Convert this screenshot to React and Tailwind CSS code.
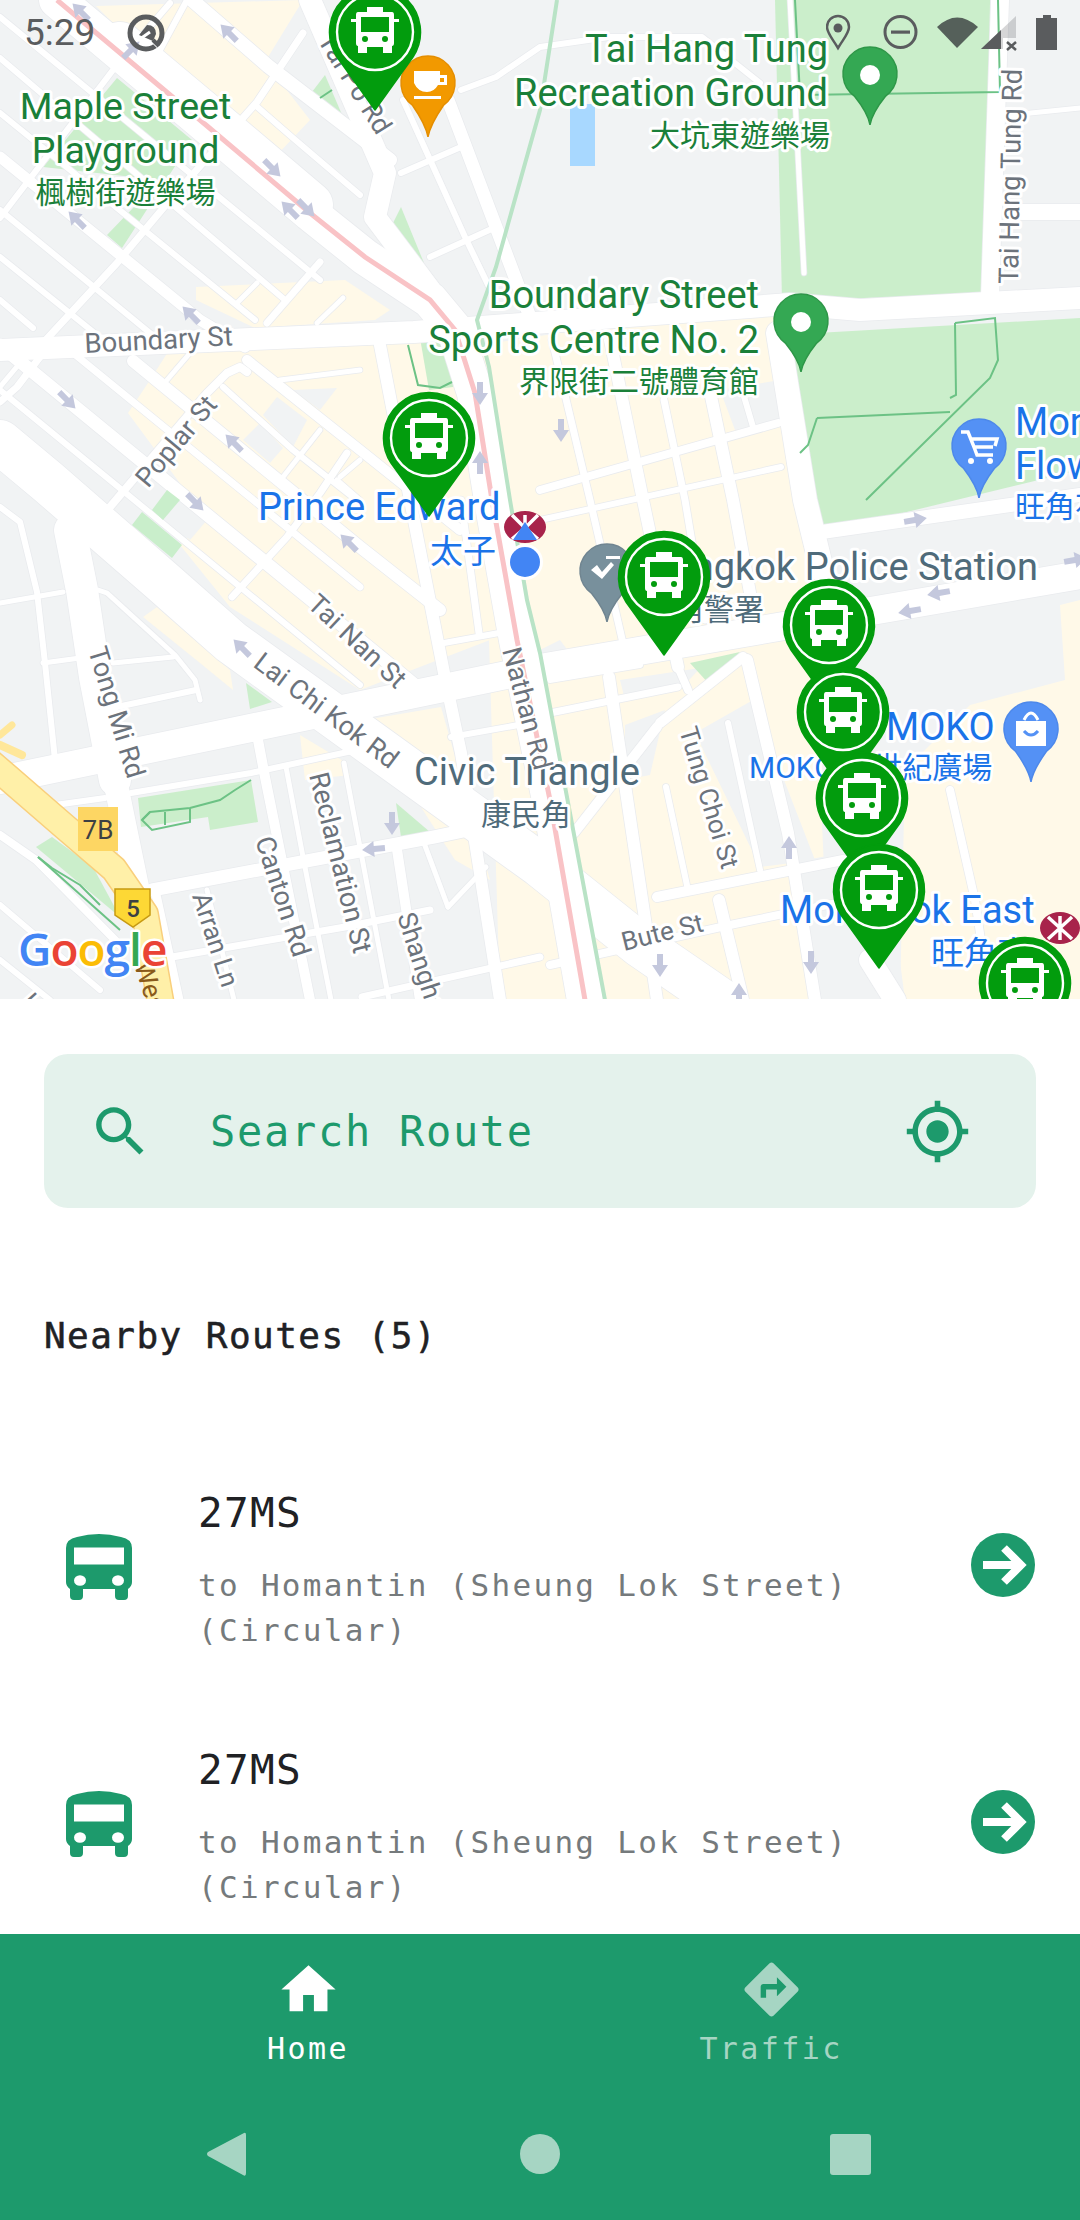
import React from "react";

const roads = [
  ["57,0 200,120 310,213 365,257 430,300 455,330 475,393 492,500 517,640 550,800 585,1000", 36],
  ["120,45 200,112 310,205", 46],
  ["0,350 414,332 790,304 860,310 1080,298", 22],
  ["0,780 241,730 540,668 1080,575", 28],
  ["0,442 48,482 163,582 231,642 400,764 540,865 640,945 720,1000", 44],
  ["70,530 82,590 95,677 115,780", 32],
  ["115,780 150,950 165,1000", 24],
  ["1000,0 990,296", 18],
  ["310,0 385,173 375,217 430,290", 22],
  ["778,333 805,500 822,570", 24],
  ["815,533 1080,495", 14],
  ["1022,212 1080,212", 16],
  ["1010,115 1080,108", 5],
  ["790,0 804,273", 5],
  ["448,100 496,227 530,317", 13],
  ["403,100 427,153 465,237 492,293", 6],
  ["401,173 461,147", 6],
  ["430,257 496,227", 6],
  ["461,90 496,77 540,47 609,37 702,37 760,83", 6],
  ["192,0 268,66 390,160", 14],
  ["255,105 293,138 360,195", 6],
  ["160,50 187,0", 6],
  ["0,17 320,280", 6],
  ["0,58 285,300", 6],
  ["0,113 255,320", 6],
  ["0,157 200,320 245,347", 11],
  ["0,210 167,347", 6],
  ["0,257 97,335", 6],
  ["0,300 33,328", 6],
  ["43,343 117,263 170,200 257,102 303,33", 7],
  ["0,218 113,70 170,3", 6],
  ["238,302 257,283", 5],
  ["267,323 320,262", 7],
  ["317,323 343,298", 5],
  ["0,345 200,509 360,640 427,695", 13],
  ["72,352 360,587", 7],
  ["133,361 360,547 440,610", 12],
  ["0,390 360,685", 6],
  ["223,387 293,450 360,503", 6],
  ["247,360 360,450 460,530", 10],
  ["337,480 360,500", 5],
  ["110,507 207,393 227,373 240,367 247,372", 8],
  ["0,402 17,387 43,353", 7],
  ["0,387 20,363", 5],
  ["167,380 190,353", 5],
  ["232,597 287,537 320,493 347,453", 7],
  ["283,477 320,430", 5],
  ["340,477 360,460", 5],
  ["280,380 360,370", 5],
  ["0,507 20,522 37,592 45,663 55,760", 6],
  ["0,603 63,592", 5],
  ["43,663 80,658", 5],
  ["113,663 173,657", 5],
  ["98,590 107,593 175,655 195,680 200,700", 5],
  ["379,340 410,500 444,673 461,753 500,1000", 12],
  ["461,500 479,633", 7],
  ["444,643 499,633", 6],
  ["451,737 530,723", 6],
  ["552,340 590,500 628,665", 7],
  ["610,340 643,500 678,667", 12],
  ["664,400 685,500 705,620", 7],
  ["709,387 733,500 755,620", 12],
  ["743,393 753,427", 6],
  ["540,490 778,423", 8],
  ["540,520 781,467", 6],
  ["609,677 657,1000", 12],
  ["678,667 688,690", 8],
  ["660,723 743,657", 10],
  ["574,833 657,727", 10],
  ["666,787 688,890", 6],
  ["719,900 743,1000", 12],
  ["747,660 788,833 815,1000", 12],
  ["728,723 760,870", 6],
  ["870,960 895,1000", 22],
  ["657,897 843,860", 10],
  ["550,965 730,925 900,890", 8],
  ["550,713 678,687", 7],
  ["550,680 640,665", 6],
  ["117,707 196,690", 6],
  ["131,793 251,773 380,745", 6],
  ["55,805 105,798", 6],
  ["152,890 434,837 540,815", 13],
  ["172,957 345,927 430,910", 7],
  ["362,997 540,957", 7],
  ["258,740 265,777 310,1000", 10],
  ["286,767 303,857 331,1000", 5],
  ["344,763 389,1000", 5],
  ["396,843 420,1000", 10],
  ["424,843 448,907", 5],
  ["448,907 486,867", 5],
  ["155,890 179,1000", 9],
  ["207,890 234,1000", 5],
  ["0,835 36,860 120,945", 8],
  ["0,905 100,990", 6],
  ["0,960 50,1000", 6],
  ["950,790 975,900 990,1000", 8],
];

const arrows = [
  [81,12,-45],[229,33,-45],[131,50,45],[272,168,135],[290,210,-45],[306,208,135],[77,220,-45],[191,315,-45],
  [67,400,135],[234,443,-45],[480,393,180],[480,463,0],[195,502,135],[349,543,-45],[242,648,-45],[392,823,180],
  [374,849,-95],[561,430,180],[915,520,80],[1075,560,80],[939,593,-100],[910,611,-100],
  [789,848,0],[660,965,180],[811,962,180],[739,995,0],
];

const parkLines = [
  "795,0 800,95 1000,92 998,0",
  "955,323 995,318 998,360 990,378 866,500",
  "955,323 956,395 950,398",
  "817,418 950,412",
  "817,418 808,445 800,453",
  "408,345 418,385 440,388 452,382",
  "142,820 150,812 190,808 220,800 235,790 251,780",
  "150,812 142,820 152,830 190,822 190,808",
  "165,812 165,825",
  "38,857 52,868 80,885 100,905",
  "38,857 120,930",
  "320,98 332,90",
];

function Road({ pts, w, color }) {
  return <polyline points={pts} fill="none" stroke={color} strokeWidth={w} strokeLinejoin="round" strokeLinecap="round" />;
}

function BusMarker({ x, y }) {
  return (
    <g transform={`translate(${x} ${y})`}>
      <path d="M0 78 L-38 25 A45.5 45.5 0 1 1 38 25 Z" fill="#029c0d" stroke="#029c0d" strokeWidth="1.5" strokeLinejoin="round" />
      <circle r="38" fill="none" stroke="#fff" strokeWidth="2.4" />
      <path d="M-8 -25 H8 V-20 H17 Q19 -20 19 -17 V-13 H24 V-10 H19 V11 Q19 14 17 14 V21 H8 V15 H-8 V21 H-17 V14 Q-19 14 -19 11 V-10 H-24 V-13 H-19 V-17 Q-19 -20 -17 -20 H-8 Z" fill="#fff" />
      <rect x="-14" y="-15" width="28" height="15" fill="#029c0d" />
      <circle cx="-10" cy="7" r="3" fill="#029c0d" />
      <circle cx="10" cy="7" r="3" fill="#029c0d" />
    </g>
  );
}

function Pin({ x, y, tip, r = 27, fill, edge, children }) {
  const d = tip - y;
  const a = r * 0.82;
  const b = r * 0.58;
  return (
    <g transform={`translate(${x} ${y})`}>
      <path d={`M0 ${d} Q-2 ${d - 12} -${b} ${a * 0.95} A${r} ${r} 0 1 1 ${b} ${a * 0.95} Q2 ${d - 12} 0 ${d} Z`} fill={fill} stroke={edge} strokeWidth="1.5" />
      {children}
    </g>
  );
}

function Label({ x, y, size = 36, fill, anchor = "start", halo = 6, rot, children }) {
  return (
    <text
      x={x}
      y={y}
      fontSize={size}
      fill={fill}
      textAnchor={anchor}
      stroke="#ffffff"
      strokeWidth={halo}
      strokeLinejoin="round"
      transform={rot !== undefined ? `rotate(${rot} ${x} ${y})` : undefined}
      className="[paint-order:stroke]"
    >
      {children}
    </text>
  );
}

const GREEN = "#1a8039";
const BLUE = "#1a73e8";
const SLATE = "#4f6b7a";
const ST = "#6c737c";

function MapCanvas() {
  return (
    <svg viewBox="0 0 1080 999" width="1080" height="999" className="block font-['Roboto','Noto_Sans_CJK_TC',sans-serif]">
      <rect width="1080" height="999" fill="#f1f3f4" />
      <g fill="#fff9e8">
        <polygon points="96,6 303,0 265,62 310,120 275,157 205,115" />
        <polygon points="196,287 345,280 390,310 375,320 255,328 196,300" />
        <polygon points="128,413 150,380 168,352 480,340 490,640 360,690 230,607 180,545 207,520 165,463" />
        <polygon points="143,617 157,607 230,670 233,690 200,663" />
        <polygon points="365,720 441,707 490,880 455,860" />
        <polygon points="480,345 780,300 810,560 830,1000 500,1000" />
        <polygon points="1080,600 1060,605 1065,680 970,705 905,770 900,1000 1080,1000" />
        <polygon points="300,735 345,762 350,775 305,780" />
      </g>
      <g fill="#f1f3f4">
        <polygon points="695,733 753,700 815,860 760,867" />
        <polygon points="795,862 885,845 905,1000 815,1000" />
        <polygon points="620,680 700,668 680,690 625,700" />
        <polygon points="625,725 665,710 650,775 625,780" />
        <polygon points="720,390 780,380 783,425 735,430" />
        <polygon points="263,415 277,397 307,420 293,447" />
        <polygon points="243,440 260,423 283,448 270,463" />
        <polygon points="293,390 337,388 320,410" />
        <polygon points="165,497 207,520 190,540 165,520" />
        <polygon points="540,650 560,640 575,660 545,670" />
        <polygon points="820,535 1080,500 1080,570 870,620" />
      </g>
      <g fill="#cbeecb">
        <polygon points="775,0 990,0 988,295 782,300" />
        <polygon points="782,335 1080,318 1080,470 812,535" />
        <polygon points="117,78 192,140 122,248 107,235 160,180 43,167" />
        <polygon points="312,92 325,75 343,117" />
        <polygon points="391,227 401,207 424,263 391,240" />
        <polygon points="420,338 451,337 453,387 429,390" />
        <polygon points="138,798 251,780 258,822 210,830 208,817 141,827" />
        <polygon points="36,847 52,837 93,867 120,917" />
        <polygon points="246,683 272,702 250,709" />
        <polygon points="396,803 430,832 401,837" />
        <polygon points="690,663 740,652 710,685" />
      </g>
      <rect x="570" y="104" width="25" height="62" fill="#a8d8ff" />
      {roads.map(([p, w], i) => <Road key={"c" + i} pts={p} w={w + 1.5} color="#e9ebee" />)}
      {roads.map(([p, w], i) => <Road key={"r" + i} pts={p} w={w} color="#ffffff" />)}
      <g fill="#c9eecb">
        <polygon points="152,510 167,490 180,500 163,520" />
        <polygon points="132,525 142,512 182,545 172,558" />
      </g>
      <Road pts="-10,762 65,827 114,869 145,914 162,1010" w={28} color="#f9cf7c" />
      <Road pts="-10,762 65,827 114,869 145,914 162,1010" w={25} color="#fff0a8" />
      <Road pts="0,735 12,725" w={7} color="#ffe79a" />
      <Road pts="0,745 22,755" w={8} color="#ffe79a" />
      <polyline points="557,0 540,110 496,267 477,320 489,367 510,500 527,600 540,653 605,1000" fill="none" stroke="#b9e3c6" strokeWidth="4" />
      <polyline points="57,0 200,120 310,213 365,257 430,300 455,330 475,393 492,500 517,640 550,800 585,1000" fill="none" stroke="#f9c3c6" strokeWidth="5" />
      <g fill="none" stroke="#6cc285" strokeWidth="2">
        {parkLines.map((p, i) => <polyline key={i} points={p} />)}
      </g>
      <g fill="#c4c8dd">
        {arrows.map(([x, y, r], i) => (
          <path key={i} transform={`translate(${x} ${y}) rotate(${r})`} d="M0 -12 L8 0 H3 V11 H-3 V0 H-8 Z" />
        ))}
      </g>
      <g>
        <Label x={85} y={353} size={27.5} fill={ST} rot={-3}>Boundary St</Label>
        <Label x={148} y={489} size={27} fill={ST} rot={-50}>Poplar St</Label>
        <Label x={317} y={40} size={27} fill={ST} rot={58}>Tai Po Rd</Label>
        <Label x={88} y={650} size={27} fill={ST} rot={73}>Tong Mi Rd</Label>
        <Label x={306} y={606} size={27} fill={ST} rot={43}>Tai Nan St</Label>
        <Label x={252} y={666} size={27} fill={ST} rot={37}>Lai Chi Kok Rd</Label>
        <Label x={309} y={775} size={27.5} fill={ST} rot={76}>Reclamation St</Label>
        <Label x={255} y={840} size={27} fill={ST} rot={72}>Canton Rd</Label>
        <Label x={192} y={896} size={26} fill={ST} rot={72}>Arran Ln</Label>
        <Label x={397} y={916} size={26.5} fill={ST} rot={72}>Shanghai St</Label>
        <Label x={679} y={730} size={26} fill={ST} rot={73}>Tung Choi St</Label>
        <Label x={624} y={951} size={26} fill={ST} rot={-14}>Bute St</Label>
        <Label x={1018} y={284} size={27.5} fill={ST} rot={-89}>Tai Hang Tung Rd</Label>
        <Label x={20} y={1003} size={26} fill={ST} rot={48}>Lai</Label>
        <Label x={134} y={965} size={26} fill="#8a5a1a" rot={72} halo={0}>West</Label>
      </g>
      <rect x="78" y="807" width="40" height="44" fill="#fdd663" />
      <text x="98" y="839" fontSize="26" fill="#3c4043" textAnchor="middle">7B</text>
      <path d="M115 889 H150 V915 L133 927 L115 915 Z" fill="#fdd835" stroke="#c79a12" strokeWidth="1.5" />
      <text x="133" y="917" fontSize="24" fill="#3c4043" textAnchor="middle" fontWeight="500">5</text>
      <Label x={125.5} y={119} size={37.5} fill={GREEN} anchor="middle">Maple Street</Label>
      <Label x={125.5} y={163} size={37.5} fill={GREEN} anchor="middle">Playground</Label>
      <Label x={125.5} y={203} size={30} fill={GREEN} anchor="middle">楓樹街遊樂場</Label>
      <Label x={828} y={62} size={38} fill={GREEN} anchor="end">Tai Hang Tung</Label>
      <Label x={828} y={106} size={38} fill={GREEN} anchor="end">Recreation Ground</Label>
      <Label x={830} y={146} size={30} fill={GREEN} anchor="end">大坑東遊樂場</Label>
      <Label x={759} y={308} size={38} fill={GREEN} anchor="end">Boundary Street</Label>
      <Label x={759} y={353} size={38} fill={GREEN} anchor="end">Sports Centre No. 2</Label>
      <Label x={759} y={392} size={30} fill={GREEN} anchor="end">界限街二號體育館</Label>
      <Label x={1015} y={435} size={38} fill={BLUE}>Mong Kok</Label>
      <Label x={1015} y={479} size={38} fill={BLUE}>Flower</Label>
      <Label x={1015} y={517} size={30} fill={BLUE}>旺角花</Label>
      <Label x={258} y={520} size={38} fill={BLUE}>Prince Edward</Label>
      <Label x={430} y={563} size={33} fill={BLUE}>太子</Label>
      <Label x={1038} y={580} size={38} fill={SLATE} anchor="end">Mongkok Police Station</Label>
      <Label x={764} y={620} size={30} fill={SLATE} anchor="end">旺角警署</Label>
      <Label x={414} y={785} size={38} fill={SLATE}>Civic Triangle</Label>
      <Label x={481} y={825} size={30} fill={SLATE}>康民角</Label>
      <Label x={886} y={740} size={38} fill={BLUE}>MOKO</Label>
      <Label x={749} y={778} size={30} fill={BLUE}>MOKO 新世紀廣場</Label>
      <Label x={780} y={923} size={38} fill={BLUE}>Mong Kok East</Label>
      <Label x={931} y={965} size={33} fill={BLUE}>旺角東</Label>
      <Label x={502} y={650} size={27} fill={ST} rot={75} halo={4}>Nathan Rd</Label>
      <text x="18" y="966" fontSize="46" fontWeight="600" stroke="#ffffff" strokeWidth="5" strokeLinejoin="round" className="[paint-order:stroke] font-['Open_Sans',sans-serif] tracking-[-1px]">
        <tspan fill="#4285f4">G</tspan><tspan fill="#ea4335">o</tspan><tspan fill="#fbbc05">o</tspan><tspan fill="#4285f4">g</tspan><tspan fill="#34a853">l</tspan><tspan fill="#ea4335">e</tspan>
      </text>
      <Pin x={870} y={75} tip={125} fill="#34a853" edge="#2e9748"><circle r="10" fill="#fff" /></Pin>
      <Pin x={801} y={322} tip={372} fill="#34a853" edge="#2e9748"><circle r="10" fill="#fff" /></Pin>
      <Pin x={428} y={84} tip={137} fill="#f29900" edge="#e58e00">
        <path d="M-14 -13 H12 V-9 H19 V1 H10 Q6 8 -1 8 Q-10 8 -14 -1 Z M12 -6 V-2 H16 V-6 Z" fill="#fff" fillRule="evenodd" />
        <rect x="-14" y="12" width="27" height="3" fill="#fff" />
      </Pin>
      <Pin x={979} y={447} tip={498} fill="#5491f5" edge="#4d88ea">
        <path d="M-18 -15 H-11 L-5 0 H14 M-5 0 L-2 8 H14 M-9 -8 H18 L16 -1" fill="none" stroke="#fff" strokeWidth="3.5" />
        <circle cx="-8" cy="14" r="3" fill="#fff" /><circle cx="11" cy="14" r="3" fill="#fff" />
      </Pin>
      <Pin x={1031} y={730} tip={782} fill="#5491f5" edge="#4d88ea">
        <path d="M-15 -9 H15 V16 H-15 Z" fill="#fff" />
        <path d="M-7 -10 Q0 -24 7 -10" fill="none" stroke="#fff" strokeWidth="3" />
        <path d="M-7 1 Q0 9 7 1" fill="none" stroke="#5491f5" strokeWidth="3" />
      </Pin>
      <Pin x={607} y={572} tip={622} fill="#78909c" edge="#708591">
        <path d="M-16 -2 L-10 -7 L-5 0 L4 -10 L7 -7 L-5 7 Z" fill="#fff" />
        <rect x="-1" y="-16" width="14" height="3" fill="#fff" />
      </Pin>
      <ellipse cx="525" cy="527" rx="21" ry="16" fill="#a8234b" />
      <path d="M512 515 L525 528 L538 515 M512 539 L525 528 L538 539 M525 515 V539" fill="none" stroke="#fff" strokeWidth="3.5" />
      <path d="M525 522 L537 540 H513 Z" fill="#4285f4" />
      <circle cx="525" cy="562" r="18" fill="#ffffff" />
      <circle cx="525" cy="562" r="15" fill="#4285f4" />
      <ellipse cx="1060" cy="928" rx="20" ry="16" fill="#a8234b" />
      <path d="M1048 917 L1060 928 L1072 917 M1048 939 L1060 928 L1072 939 M1060 916 V940" fill="none" stroke="#fff" strokeWidth="3.5" />
      {[[375, 32], [429, 438], [664, 577], [829, 625], [843, 712], [862, 798], [879, 890], [1025, 983]].map(([x, y]) => (
        <BusMarker key={x} x={x} y={y} />
      ))}
    </svg>
  );
}

function StatusBar() {
  return (
    <div className="absolute left-0 top-0 flex h-[66px] w-[1080px] items-center justify-between pl-[24px] pr-[22px] font-['Roboto',sans-serif] text-[37px] text-[#5a5c5e]">
      <div className="flex items-center gap-[32px]">
        <span>5:29</span>
        <svg width="38" height="38" viewBox="0 0 38 38">
          <circle cx="19" cy="19" r="16" fill="none" stroke="#5a5c5e" strokeWidth="5" />
          <path d="M12 21 L20 11 Q29 11 29 20 L26 27 Z" fill="#5a5c5e" />
          <path d="M13 25 L23 18 M27 29 L34 36" stroke="#fff" strokeWidth="3" />
          <path d="M26 26 L32 32" stroke="#5a5c5e" strokeWidth="4" />
        </svg>
      </div>
      <svg width="232" height="40" viewBox="827 13 232 40">
        <path d="M839 48 C833 38 828 33 828 27 A11 11 0 0 1 850 27 C850 33 845 38 839 48 Z" fill="none" stroke="#5a5c5e" strokeWidth="2.5" />
        <circle cx="839" cy="28" r="4.5" fill="#5a5c5e" />
        <circle cx="901.5" cy="32" r="15.5" fill="none" stroke="#5a5c5e" strokeWidth="3" />
        <rect x="892" y="30.5" width="19" height="3.2" fill="#5a5c5e" />
        <path d="M938 27 Q958 8 979 27 L958 48 Z" fill="#55605a" />
        <path d="M982 49 L1017 16 V38 H1004 V49 Z" fill="#5a5c5e" fillOpacity="0.25" />
        <path d="M982 49 L1002 30 V49 Z" fill="#5a5c5e" />
        <path d="M1008 42 L1017 50 M1017 42 L1008 50" stroke="#5a5c5e" strokeWidth="2.5" />
        <path d="M1044 15 H1052 V18 H1058 V50 H1037 V18 H1044 Z" fill="#5a5c5e" />
      </svg>
    </div>
  );
}

function RouteRow() {
  return (
    <div className="flex h-[257px] items-center">
      <svg width="66" height="66" viewBox="0 0 66 66" className="ml-[22px] shrink-0">
        <path d="M0 14 Q0 5 11 3 Q22 0 33 0 Q44 0 55 3 Q66 5 66 14 V48 Q66 52 62 55 V62 Q62 66 58 66 H53 Q49 66 49 62 V55 H17 V62 Q17 66 13 66 H8 Q4 66 4 62 V55 Q0 52 0 48 Z" fill="#1d9a6c" />
        <rect x="8" y="13.5" width="50" height="17" fill="#fff" />
        <ellipse cx="14" cy="46.5" rx="6" ry="5.3" fill="#fff" />
        <ellipse cx="52" cy="46.5" rx="6" ry="5.3" fill="#fff" />
      </svg>
      <div className="ml-[66px] flex w-[740px] flex-col pt-[4px] font-['DejaVu_Sans_Mono',monospace]">
        <div className="h-[78px] text-[41px] leading-[56px] tracking-[1.3px] text-[#202124]">27MS</div>
        <div className="text-[31px] leading-[45px] tracking-[2.3px] text-[#757a7c]">
          to Homantin (Sheung Lok Street)
          <br />
          (Circular)
        </div>
      </div>
      <svg width="64" height="64" viewBox="0 0 64 64" className="ml-[33px] -translate-y-[2px] shrink-0">
        <circle cx="32" cy="32" r="32" fill="#1d9a6c" />
        <path d="M12 32 H46 M33 15 L50 32 L33 49" fill="none" stroke="#fff" strokeWidth="8" />
      </svg>
    </div>
  );
}

export default function App() {
  return (
    <div className="relative flex h-[2220px] w-[1080px] flex-col overflow-hidden bg-white">
      <div className="h-[999px] shrink-0"><MapCanvas /></div>
      <StatusBar />
      <main className="flex-1 overflow-hidden">
        <div className="mx-[44px] mt-[55px] flex h-[154px] items-center rounded-[24px] bg-[#e4f2ec]">
          <svg width="65" height="65" viewBox="0 0 24 24" className="ml-[44px] shrink-0" fill="#1d9a6c">
            <path d="M15.5 14h-.79l-.28-.27C15.41 12.59 16 11.11 16 9.5 16 5.91 13.09 3 9.5 3S3 5.91 3 9.5 5.91 16 9.5 16c1.61 0 3.09-.59 4.23-1.57l.27.28v.79l5 4.99L20.49 19l-4.99-5zm-6 0C7.01 14 5 11.99 5 9.5S7.01 5 9.5 5 14 7.01 14 9.5 11.99 14 9.5 14z" />
          </svg>
          <span className="ml-[57px] flex-1 font-['DejaVu_Sans_Mono',monospace] text-[42px] tracking-[1.7px] text-[#1d9a6c]">Search Route</span>
          <svg width="67" height="67" viewBox="0 0 24 24" className="mr-[65px] shrink-0" fill="#1d9a6c">
            <path d="M12 8c-2.21 0-4 1.79-4 4s1.79 4 4 4 4-1.79 4-4-1.79-4-4-4zm8.94 3c-.46-4.17-3.77-7.48-7.94-7.94V1h-2v2.06C6.83 3.52 3.52 6.83 3.06 11H1v2h2.06c.46 4.17 3.77 7.48 7.94 7.94V23h2v-2.06c4.17-.46 7.48-3.77 7.94-7.94H23v-2h-2.06zM12 19c-3.87 0-7-3.13-7-7s3.13-7 7-7 7 3.13 7 7-3.13 7-7 7z" />
          </svg>
        </div>
        <div className="mx-[44px] mt-[104px] font-['DejaVu_Sans_Mono',monospace] text-[36px] leading-[48px] tracking-[1.45px] text-[#202124] [-webkit-text-stroke:0.5px_#202124]">Nearby Routes (5)</div>
        <div className="mx-[44px] mt-[78px]">
          <RouteRow />
          <RouteRow />
        </div>
      </main>
      <nav className="h-[286px] shrink-0 bg-[#1d9a6c]">
        <div className="flex h-[170px] font-['DejaVu_Sans_Mono',monospace] text-[30px] leading-[40px] tracking-[2.4px]">
          <div className="ml-[222px] mt-[23px] flex w-[172px] flex-col items-center text-white">
            <svg width="65" height="65" viewBox="0 0 24 24" fill="#fff"><path d="M10 20v-6h4v6h5v-8h3L12 3 2 12h3v8z" /></svg>
            <span className="mt-[7px]">Home</span>
          </div>
          <div className="ml-[291px] mt-[23px] flex w-[172px] flex-col items-center text-[#a6d5c3]">
            <svg width="65" height="65" viewBox="0 0 24 24" fill="#a6d5c3"><path d="M21.71 11.29l-9-9c-.39-.39-1.02-.39-1.41 0l-9 9c-.39.39-.39 1.02 0 1.41l9 9c.39.39 1.02.39 1.41 0l9-9c.39-.38.39-1.01 0-1.41zM14 14.5V12h-4v3H8v-4c0-.55.45-1 1-1h5V7.5l3.5 3.5-3.5 3.5z" /></svg>
            <span className="mt-[7px]">Traffic</span>
          </div>
        </div>
        <div className="flex items-center pt-[27px]">
          <svg width="40" height="46" viewBox="0 0 40 46" className="ml-[206px]"><path d="M38 2 Q40 1 40 4 V42 Q40 46 37 44 L2 25 Q0 23 2 21 Z" fill="#a6d5c3" /></svg>
          <div className="ml-[274px] h-[40px] w-[40px] rounded-full bg-[#a6d5c3]" />
          <div className="ml-[270px] h-[41px] w-[41px] rounded-[3px] bg-[#a6d5c3]" />
        </div>
      </nav>
    </div>
  );
}
